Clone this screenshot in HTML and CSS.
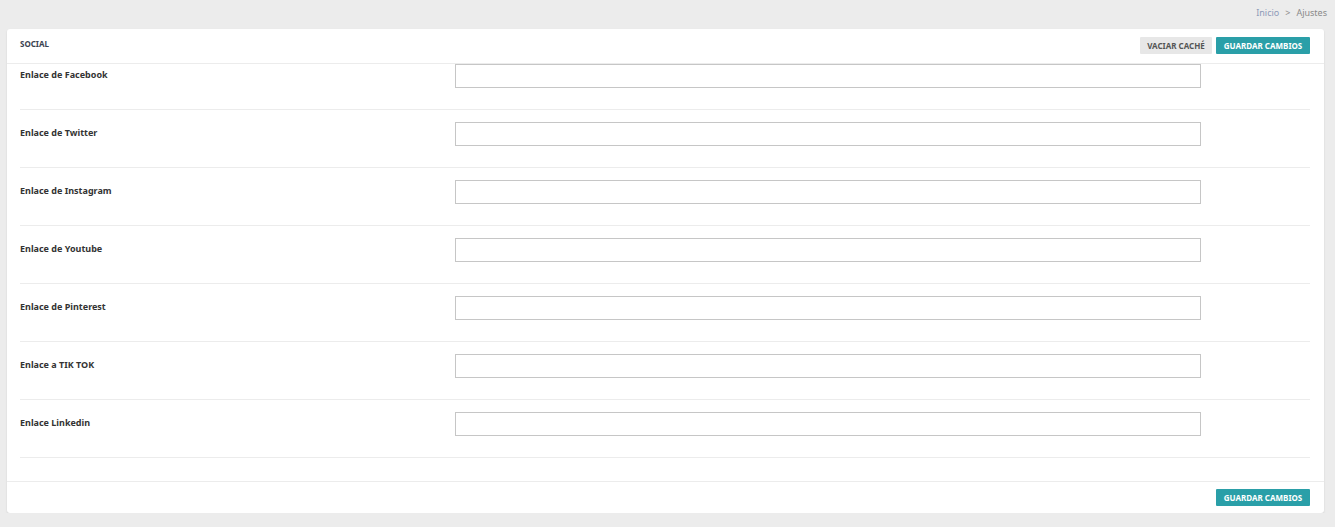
FILE: index.html
```html
<!DOCTYPE html>
<html lang="es">
<head>
<meta charset="utf-8">
<title>Ajustes - Social</title>
<link rel="stylesheet" href="styles.css">
</head>
<body>
<div class="page">
  <nav class="crumbs"><a class="crumb-link">Inicio</a><span class="sep">&gt;</span><span class="crumb-cur">Ajustes</span></nav>
  <section class="card">
    <header class="card-head">
      <h2 class="card-title">SOCIAL</h2>
      <div class="actions">
        <button class="btn btn-grey">VACIAR CACHÉ</button>
        <button class="btn btn-teal">GUARDAR CAMBIOS</button>
      </div>
    </header>
    <div class="card-body">
      <div class="row first"><label class="lbl">Enlace de Facebook</label><input class="field" type="text"></div>
      <div class="row"><label class="lbl">Enlace de Twitter</label><input class="field" type="text"></div>
      <div class="row"><label class="lbl">Enlace de Instagram</label><input class="field" type="text"></div>
      <div class="row"><label class="lbl">Enlace de Youtube</label><input class="field" type="text"></div>
      <div class="row"><label class="lbl">Enlace de Pinterest</label><input class="field" type="text"></div>
      <div class="row"><label class="lbl">Enlace a TIK TOK</label><input class="field" type="text"></div>
      <div class="row"><label class="lbl">Enlace Linkedin</label><input class="field" type="text"></div>
    </div>
    <footer class="card-foot">
      <button class="btn btn-teal">GUARDAR CAMBIOS</button>
    </footer>
  </section>
</div>
</body>
</html>
```

FILE: styles.css
```css
* { box-sizing: border-box; }
html, body { margin: 0; padding: 0; }
body {
  background: #ececec;
  font-family: "Noto Sans", "Open Sans", sans-serif;
  color: #333;
}
.page {
  padding: 0 11px 0 7px;
}
.crumbs {
  display: flex;
  justify-content: flex-end;
  align-items: center;
  height: 29px;
  margin-right: -3px;
  font-size: 9px;
  gap: 6px;
  padding-bottom: 4px;
}
.crumb-link { color: #8c9ab8; }
.sep { color: #8a8a8a; }
.crumb-cur { color: #8a8a8a; }
.card {
  background: #fff;
  border-radius: 3px;
  box-shadow: 0 1px 2px rgba(0,0,0,0.12);
}
.card-head {
  display: flex;
  justify-content: space-between;
  align-items: flex-start;
  height: 35px;
  padding: 8px 14px 0 13px;
  border-bottom: 1px solid #ececec;
}
.card-title {
  margin: 0;
  font-size: 8px;
  font-weight: 700;
  color: #3a4250;
  line-height: 14px;
}
.actions { display: flex; gap: 4px; }
.btn {
  height: 17px;
  border: 0;
  border-radius: 1px;
  padding: 0;
  font-family: "Noto Sans", "Open Sans", sans-serif;
  font-size: 8px;
  font-weight: 700;
  line-height: 17px;
  cursor: pointer;
}
.btn-grey { background: #e7e7e7; color: #555; width: 72px; }
.btn-teal { background: #2a9fa8; color: #fff; width: 94px; }
.card-body {
  padding: 0 14px 23px 13px;
}
.row {
  display: grid;
  grid-template-columns: 435px 746px;
  align-items: start;
  padding: 12px 0 21px;
  border-bottom: 1px solid #ececec;
}
.row.first { padding-top: 0; }
.lbl {
  font-size: 9px;
  font-weight: 700;
  color: #333;
  padding-top: 5px;
  line-height: 12px;
}
.field {
  display: block;
  height: 24px;
  border: 1px solid #c6c6c6;
  border-radius: 0;
  background: #fff;
  margin: 0;
  width: 746px;
}
.card-foot {
  display: flex;
  justify-content: flex-end;
  padding: 7px 14px 7px 13px;
  border-top: 1px solid #ececec;
}
```
